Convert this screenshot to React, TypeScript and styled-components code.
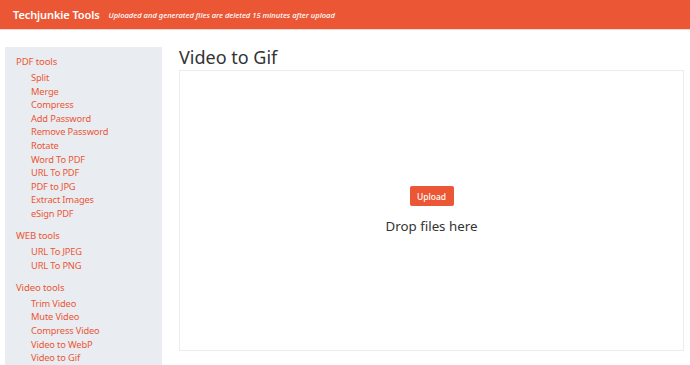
import React from "react";
import styled, { createGlobalStyle } from "styled-components";

const GlobalStyle = createGlobalStyle`
  html, body {
    margin: 0;
    padding: 0;
    background: #fff;
    font-family: "Noto Sans", "Open Sans", sans-serif;
  }
`;

interface Group {
  title: string;
  items: string[];
}

const groups: Array<Group> = [
  {
    title: "PDF tools",
    items: ["Split", "Merge", "Compress", "Add Password", "Remove Password", "Rotate", "Word To PDF", "URL To PDF", "PDF to JPG", "Extract Images", "eSign PDF"],
  },
  { title: "WEB tools", items: ["URL To JPEG", "URL To PNG"] },
  { title: "Video tools", items: ["Trim Video", "Mute Video", "Compress Video", "Video to WebP", "Video to Gif"] },
];

const App = () => {
  return (
    <>
      <GlobalStyle />
      <Page>
        <Header>
          <Brand>Techjunkie Tools</Brand>
          <Notice>Uploaded and generated files are deleted 15 minutes after upload</Notice>
        </Header>
        <Body>
          <Sidebar>
            {groups.map((group) => (
              <GroupBlock key={group.title}>
                <GroupTitle>{group.title}</GroupTitle>
                <ItemList>
                  {group.items.map((item) => (
                    <Item key={item}>{item}</Item>
                  ))}
                </ItemList>
              </GroupBlock>
            ))}
          </Sidebar>
          <Main>
            <Title>Video to Gif</Title>
            <DropZone>
              <UploadButton>Upload</UploadButton>
              <DropText>Drop files here</DropText>
            </DropZone>
          </Main>
        </Body>
      </Page>
    </>
  );
};

const Page = styled.div`
  width: 690px;
  height: 365px;
  overflow: hidden;
`;

const Header = styled.header`
  height: 29px;
  background: #eb5735;
  border-bottom: 1px solid #f6d6cc;
  display: flex;
  align-items: center;
  padding-left: 13px;
  color: #fff;
`;

const Brand = styled.div`
  font-size: 11px;
  font-weight: 600;
  letter-spacing: -0.1px;
  margin-right: 9px;
`;

const Notice = styled.div`
  font-size: 7.6px;
  font-style: italic;
  font-weight: 500;
`;

const Body = styled.div`
  display: flex;
  gap: 17px;
  padding: 17px 6px 0 5px;
`;

const Sidebar = styled.nav`
  width: 157px;
  flex-shrink: 0;
  background: #e9ecf0;
  padding: 8px 0 20px 11px;
  box-sizing: border-box;
  height: 320px;
`;

const GroupBlock = styled.div`
  margin-bottom: 8.5px;
`;

const GroupTitle = styled.div`
  font-size: 9.6px;
  letter-spacing: -0.15px;
  line-height: 14px;
  color: #eb5735;
  margin-bottom: 2px;
`;

const ItemList = styled.ul`
  list-style: none;
  margin: 0;
  padding: 0 0 0 15px;
`;

const Item = styled.li`
  font-size: 9.3px;
  letter-spacing: -0.15px;
  line-height: 13.6px;
  color: #eb5735;
`;

const Main = styled.main`
  flex: 1;
  display: flex;
  flex-direction: column;
`;

const Title = styled.h1`
  margin: 0;
  font-size: 18px;
  font-weight: 400;
  line-height: 20px;
  color: #333;
  padding-bottom: 3px;
`;

const DropZone = styled.div`
  height: 281px;
  border: 1px solid #ececec;
  display: flex;
  flex-direction: column;
  align-items: center;
  justify-content: center;
  box-sizing: border-box;
`;

const UploadButton = styled.button`
  background: #eb5735;
  color: #fff;
  border: none;
  border-radius: 2px;
  font-family: inherit;
  font-size: 8.5px;
  font-weight: 500;
  width: 44px;
  height: 20px;
  padding: 0;
  margin-bottom: 11px;
`;

const DropText = styled.div`
  font-size: 13.3px;
  color: #333;
`;

export default App;
